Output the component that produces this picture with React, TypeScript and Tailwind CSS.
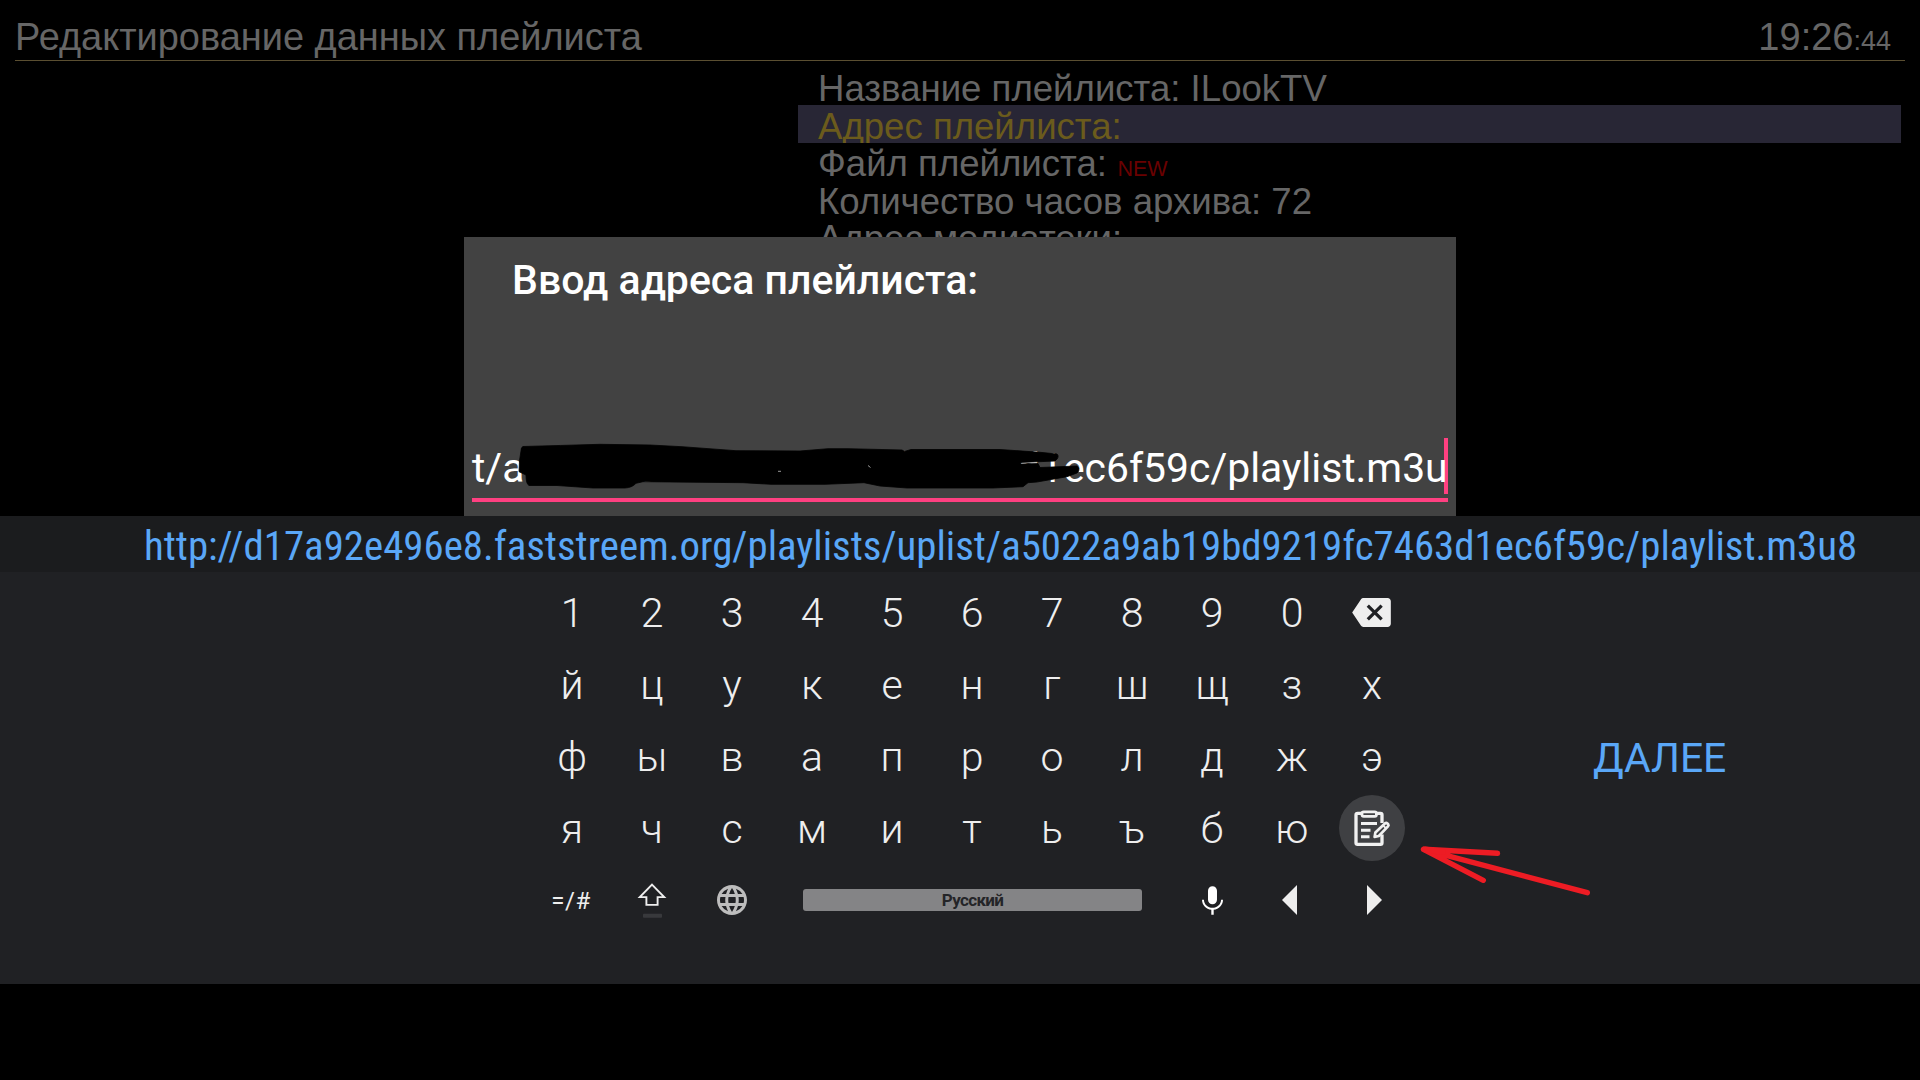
import React from "react";
import { MdLanguage } from "react-icons/md";

const menu = [
  { label: "Название плейлиста: ILookTV" },
  { label: "Адрес плейлиста:", selected: true },
  { label: "Файл плейлиста:", badge: "NEW" },
  { label: "Количество часов архива: 72" },
  { label: "Адрес медиатеки:" },
];

const keyRows = ["1234567890", "йцукенгшщзх", "фывапролджэ", "ячсмитьъбю"];

function BackspaceIcon() {
  return (
    <svg viewBox="0 3 24 18" className="mr-[1px] mt-[-2px] h-[29px] w-[39px]" fill="#eeeeee">
      <path d="M22 3H7c-.69 0-1.23.35-1.59.88L0 12l5.41 8.11c.36.53.9.89 1.59.89h15c1.1 0 2-.9 2-2V5c0-1.1-.9-2-2-2zm-3 12.59L17.59 17 14 13.41 10.41 17 9 15.59 12.59 12 9 8.41 10.41 7 14 10.59 17.59 7 19 8.41 15.41 12 19 15.59z" />
    </svg>
  );
}

function ClipboardIcon() {
  return (
    <svg viewBox="0 0 66 66" className="h-[66px] w-[66px]" fill="none" stroke="#f1f1f1" strokeWidth="3.3" strokeLinejoin="round">
      <path d="M23 18.4H18.6Q17 18.4 17 20V47.8Q17 49.4 18.6 49.4H41.6Q43 49.4 43 47.8V39.5M37 18.4H41.6Q43 18.4 43 20V28" />
      <rect x="23" y="16.8" width="14.4" height="4.6" rx="1.6" strokeWidth="2.8" />
      <path d="M22 28.5H38M22 35.2H31.5M22 41.7H30.5" strokeWidth="3" />
      <path d="M35.6 42L36.4 37.4L46.2 28.2Q47.3 27.4 48.4 28.5L49.2 29.3Q50 30.4 49 31.4L39.8 41Z" strokeWidth="2.7" fill="#3f4043" />
      <path d="M44 30.4L47.2 33.5" strokeWidth="1.8" />
    </svg>
  );
}

function MicIcon() {
  return (
    <svg viewBox="5 2 14 19" className="h-[29px] w-[21px]" fill="#ffffff">
      <path d="M12 14c1.66 0 2.99-1.34 2.99-3L15 5c0-1.66-1.34-3-3-3S9 3.34 9 5v6c0 1.66 1.34 3 3 3zm5.7-3c0 3.2-2.74 5.4-5.7 5.4S6.3 14.2 6.3 11H5c0 3.41 2.72 6.23 6.2 6.72V21h1.6v-3.28c3.48-.48 6.2-3.3 6.2-6.72z" />
    </svg>
  );
}

function ShiftIcon() {
  return (
    <svg viewBox="0 0 30 36" className="h-9 w-[30px]" fill="none">
      <path d="M15 2.7L27.2 15.1H20.6V22.9H9.4V15.1H2.8Z" stroke="#eeeeee" strokeWidth="1.9" />
      <rect x="6" y="31.7" width="19" height="4" rx="0.8" fill="#38393c" />
    </svg>
  );
}

function Key({ children }: { children: React.ReactNode }) {
  return <div className="flex h-[72px] w-20 items-center justify-center">{children}</div>;
}

export default function App() {
  return (
    <div className="relative h-[1080px] w-[1920px] overflow-hidden bg-black font-['Liberation_Sans',sans-serif] text-[#666666]">
      <header className="mx-[15px] flex h-[61px] items-baseline justify-between border-b border-[#5b4f31] pr-[14px] pt-[15px]">
        <h1 className="text-[37.95px] leading-[44px]">Редактирование данных плейлиста</h1>
        <div className="text-[38px] leading-[44px]">
          19:26<span className="text-[27px]">:44</span>
        </div>
      </header>

      <main className="ml-[798px] mr-[19px] mt-[6.4px] text-[36.6px] leading-[37.6px]">
        {menu.map((item) => (
          <div
            key={item.label}
            className={
              item.selected
                ? "h-[37.6px] overflow-hidden bg-[#282635] pl-5 pt-[2.6px] text-[#6b5b1c]"
                : "h-[37.6px] pl-5 pt-[2.6px]"
            }
          >
            <span>{item.label}</span>
            {item.badge && <span className="ml-[10.5px] text-[21.5px] text-[#6a0000]">{item.badge}</span>}
          </div>
        ))}
      </main>

      <section className="absolute left-[464px] top-[237px] flex h-[279px] w-[992px] flex-col justify-between bg-[#424242] px-2 pb-[14px] font-['Roboto',sans-serif] text-white">
        <h2 className="ml-10 mt-[19px] text-[41px] font-medium leading-[48px]">Ввод адреса плейлиста:</h2>
        <div className="relative h-[64px] w-[976px] border-b-4 border-[#ff4081]">
          <div className="flex h-[56px] items-center whitespace-nowrap border-r-4 border-[#ff4081] pt-[3px] text-[40.85px] leading-[50px]">
            t/a5022a9ab19bd9219fc7463d1ec6f59c/playlist.m3u
          </div>
          <svg viewBox="472 438 976 64" className="absolute left-0 top-0 h-16 w-[976px]">
            <path
              d="M523 446.5Q560 445.5 600 444.3L650 445L682 446.7L736 450.7L800 451L828 448.7H848L902 450L904.5 451.5L911 449.5H1000L1040 452.3L1057 454Q1060 457 1055 461L1020 462.5L1021 464L1038 463.5L1040 467.5L1077 466Q1081 470 1077 473L1067 476.7L1037 482L1028 482.7L1023 486.7L993 488H907L880 486L864 482.7L825 484.3H771L743 482.7L643 481.7L636 483.3Q632 487.7 625 488H593L557 485.5H529Q526 484 526 475L519 471.7Q519 460 521 451Q521 447 523 446.5Z"
              fill="#000"
              stroke="#000"
              strokeWidth="0.8"
            />
            <path d="M778 471.3h3M868 465.5l2.5 2" stroke="#9a9a9a" strokeWidth="1" />
          </svg>
        </div>
      </section>

      <section className="absolute left-0 top-[516px] h-[468px] w-full bg-[#202124] font-['Roboto',sans-serif] text-[#eeeeee]">
        <div className="flex h-[56px] items-center bg-[#1b1c1e] pl-[144px] pt-[4px] text-[40.87px] leading-[50px] text-[#5aa7f7]">
          <span className="whitespace-nowrap [font-stretch:75%]">
            http://d17a92e496e8.faststreem.org/playlists/uplist/a5022a9ab19bd9219fc7463d1ec6f59c/playlist.m3u8
          </span>
        </div>
        <div className="flex">
          <div className="ml-[532px] w-[880px] pt-[5px] text-[41px] font-light leading-[72px]">
            {keyRows.map((row, i) => (
              <div key={row} className="flex h-[72px]">
                {row.split("").map((k) => (
                  <Key key={k}>{k}</Key>
                ))}
                {i === 0 && (
                  <Key>
                    <BackspaceIcon />
                  </Key>
                )}
                {i === 3 && (
                  <Key>
                    <div className="mt-[-2px] h-[66px] w-[66px] shrink-0 rounded-full bg-[#3f4043]">
                      <ClipboardIcon />
                    </div>
                  </Key>
                )}
              </div>
            ))}
            <div className="mt-[-1px] flex h-[72px] items-center">
              <Key>
                <span className="mr-[2px] mt-[2px] text-[24px] font-normal tracking-[0.5px]">=/#</span>
              </Key>
              <Key>
                <ShiftIcon />
              </Key>
              <Key>
                <MdLanguage className="h-9 w-9 text-[#bdbdbd]" />
              </Key>
              <div className="flex h-[72px] w-[400px] items-center justify-center">
                <div className="flex h-[22px] w-[339px] items-center justify-center rounded-[3px] bg-[#848486] pl-[1px] pt-[1px] text-[17px] font-bold leading-none tracking-[-0.65px] text-[#242528]">
                  Русский
                </div>
              </div>
              <Key>
                <MicIcon />
              </Key>
              <Key>
                <svg viewBox="0 0 15 30" className="mr-[5px] h-[30px] w-[15px]" fill="#eeeeee">
                  <path d="M15 0V30L0 15Z" />
                </svg>
              </Key>
              <Key>
                <svg viewBox="0 0 15 30" className="ml-[5px] h-[30px] w-[15px]" fill="#eeeeee">
                  <path d="M0 0V30L15 15Z" />
                </svg>
              </Key>
            </div>
          </div>
          <div className="ml-[181px] mt-[150px] h-[72px] text-[40.85px] leading-[72px] text-[#5aa7f7]">ДАЛЕЕ</div>
        </div>
      </section>

      <svg viewBox="0 0 180 60" className="absolute left-[1415px] top-[840px] h-[60px] w-[180px]" fill="none" stroke="#ed1c24" strokeWidth="5.4" strokeLinecap="round" strokeLinejoin="round">
        <path d="M82.5 13.3L8.5 9.3L172.3 52.7M8.5 9.3L68.3 40.3" />
        <path d="M10 9.5L28 12" strokeWidth="6" />
      </svg>
    </div>
  );
}
